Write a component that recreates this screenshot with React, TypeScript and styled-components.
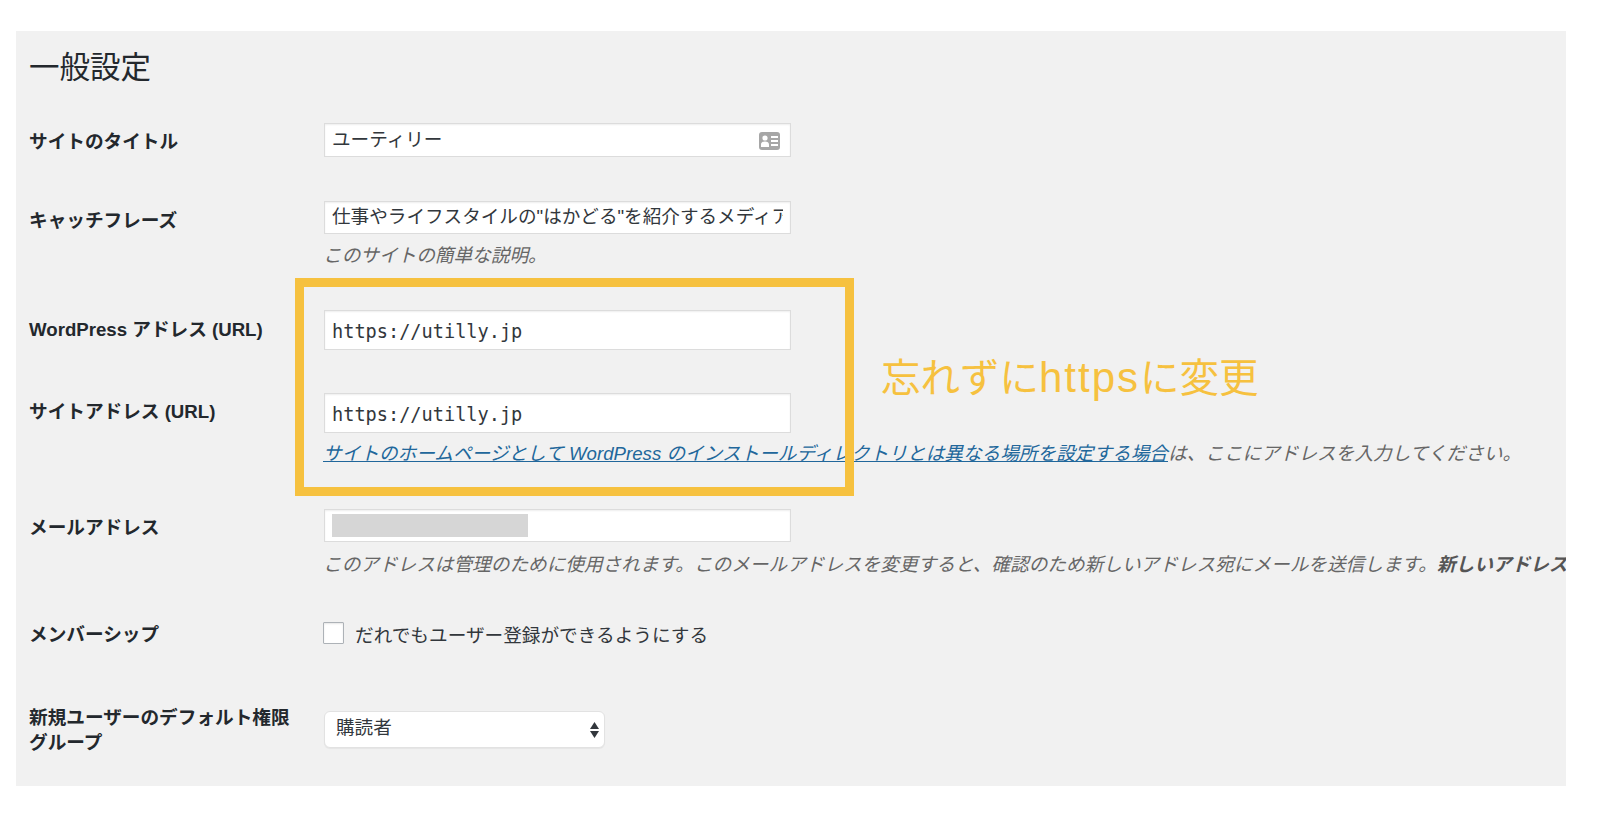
import React from 'react'
import styled, { createGlobalStyle } from 'styled-components'

const SANS = '"Liberation Sans", "Noto Sans CJK JP", sans-serif'
const ACCENT = '#f6c13f'

export default function App() {
  return (
    <>
      <GlobalStyle />
      <Panel>
        <Title>一般設定</Title>

        <Row $gap={36}>
          <Label $offset={7}>サイトのタイトル</Label>
          <Field>
            <TextInput $height={34} readOnly value="ユーティリー" />
            <ContactIcon viewBox="0 0 21 18">
              <rect width="21" height="18" rx="3" fill="#a6a6a6" />
              <circle cx="6" cy="6" r="2.6" fill="#fff" />
              <path d="M2 15v-2.5c0-1.8 1.6-3 4-3s4 1.2 4 3V15z" fill="#fff" />
              <path d="M12 4h7v2h-7zM12 8h7v2h-7zM12 12h7v2h-7z" fill="#fff" />
            </ContactIcon>
          </Field>
        </Row>

        <Row $gap={44}>
          <Label $offset={8}>キャッチフレーズ</Label>
          <Field>
            <TextInput $height={33} readOnly value={'仕事やライフスタイルの"はかどる"を紹介するメディア'} />
            <Hint $gap={10}>このサイトの簡単な説明。</Hint>
          </Field>
        </Row>

        <Row $gap={42}>
          <Label $offset={8}>WordPress アドレス (URL)</Label>
          <Field>
            <TextInput $height={40} $mono readOnly value="https://utilly.jp" />
          </Field>
        </Row>

        <Row $gap={43}>
          <Label $offset={7}>サイトアドレス (URL)</Label>
          <Field>
            <TextInput $height={40} $mono readOnly value="https://utilly.jp" />
            <Hint $gap={9}>
              <HintLink href="#">サイトのホームページとして WordPress のインストールディレクトリとは異なる場所を設定する場合</HintLink>
              は、ここにアドレスを入力してください。
            </Hint>
          </Field>
        </Row>

        <Row $gap={43}>
          <Label $offset={7}>メールアドレス</Label>
          <Field>
            <EmailBox>
              <Redaction />
            </EmailBox>
            <Hint $gap={11}>
              このアドレスは管理のために使用されます。このメールアドレスを変更すると、確認のため新しいアドレス宛にメールを送信します。
              <strong>新しいアドレスは確認が完了するまで有効になりません。</strong>
            </Hint>
          </Field>
        </Row>

        <Row $gap={45}>
          <Label $offset={1}>メンバーシップ</Label>
          <CheckRow>
            <CheckBox type="checkbox" />
            <span>だれでもユーザー登録ができるようにする</span>
          </CheckRow>
        </Row>

        <Row $gap={58}>
          <Label $wrapped>新規ユーザーのデフォルト権限グループ</Label>
          <SelectField>
            <RoleSelect defaultValue="subscriber">
              <option value="subscriber">購読者</option>
            </RoleSelect>
            <SelectArrows viewBox="0 0 9 16">
              <path d="M4.5 0 9 7H0z" fill="#32373c" />
              <path d="M0 9h9l-4.5 7z" fill="#32373c" />
            </SelectArrows>
          </SelectField>
        </Row>

        <Highlight />
        <Annotation>
          忘れずに<AnnotationLatin>https</AnnotationLatin>に変更
        </Annotation>
      </Panel>
    </>
  )
}

const GlobalStyle = createGlobalStyle`
  html, body {
    margin: 0;
    background: #fff;
  }
  body {
    font-family: ${SANS};
    color: #23282d;
  }
`

const Panel = styled.main`
  position: relative;
  box-sizing: border-box;
  width: 1550px;
  height: 755px;
  margin: 31px 0 40px 16px;
  padding: 16px 0 0 13px;
  background: #f1f1f1;
  overflow: hidden;
`

const Title = styled.h1`
  margin: 0;
  font-size: 30.5px;
  font-weight: 400;
  line-height: 40px;
  color: #23282d;
`

const Row = styled.div<{ $gap: number }>`
  display: flex;
  margin-top: ${({ $gap }) => $gap}px;
`

const Label = styled.div<{ $offset?: number; $wrapped?: boolean }>`
  flex: none;
  box-sizing: border-box;
  width: 271px;
  margin-right: 24px;
  padding-top: ${({ $offset }) => $offset ?? 0}px;
  font-size: 18.65px;
  font-weight: 700;
  line-height: ${({ $wrapped }) => ($wrapped ? 25 : 24)}px;
`

const Field = styled.div`
  position: relative;
  width: 467px;
`

const TextInput = styled.input<{ $height: number; $mono?: boolean }>`
  display: block;
  box-sizing: border-box;
  width: 100%;
  height: ${({ $height }) => $height}px;
  margin: 0;
  padding: ${({ $mono }) => ($mono ? '2px 7px 0' : '0 7px 6px')};
  background: #fff;
  border: 1.5px solid #dcdcdc;
  border-radius: 0;
  box-shadow: inset 0 1px 2px rgba(0, 0, 0, 0.07);
  outline: none;
  color: #32373c;
  font-family: ${({ $mono }) => ($mono ? '"DejaVu Sans Mono", "Noto Sans CJK JP", monospace' : SANS)};
  font-size: 18.6px;
`

const ContactIcon = styled.svg`
  position: absolute;
  top: 9px;
  right: 11px;
  width: 21px;
  height: 18px;
`

const Hint = styled.p<{ $gap: number }>`
  margin: ${({ $gap }) => $gap}px 0 0 -1px;
  font-size: 18.65px;
  font-style: italic;
  line-height: 24px;
  white-space: nowrap;
  color: #666;

  strong {
    font-weight: 700;
    color: #555;
  }
`

const HintLink = styled.a`
  color: #21679b;
  text-decoration: underline;
`

const EmailBox = styled.div`
  box-sizing: border-box;
  height: 33px;
  padding: 4px 7px;
  background: #fff;
  border: 1.5px solid #dcdcdc;
  box-shadow: inset 0 1px 2px rgba(0, 0, 0, 0.07);
`

const Redaction = styled.div`
  width: 196px;
  height: 23px;
  background: #d6d6d6;
`

const CheckRow = styled.label`
  display: flex;
  align-items: center;
  gap: 11px;
  height: 22px;
  margin-left: -1px;
  font-size: 18.65px;
  color: #32373c;
`

const CheckBox = styled.input`
  appearance: none;
  box-sizing: border-box;
  width: 21px;
  height: 22px;
  margin: 0;
  background: #fff;
  border: 1.5px solid #adb2b7;
  border-radius: 1px;
  box-shadow: inset 0 1px 2px rgba(0, 0, 0, 0.1);
`

const SelectField = styled.div`
  position: relative;
  width: 281px;
  height: 37px;
  margin-top: 6px;
`

const RoleSelect = styled.select`
  appearance: none;
  box-sizing: border-box;
  width: 100%;
  height: 100%;
  padding: 0 11px 4px;
  background: #fff;
  border: 1.5px solid #e2e2e2;
  border-radius: 6px;
  box-shadow: 0 1px 1px rgba(0, 0, 0, 0.05);
  outline: none;
  color: #32373c;
  font-family: ${SANS};
  font-size: 18.6px;
`

const SelectArrows = styled.svg`
  position: absolute;
  top: 11px;
  right: 6px;
  width: 9px;
  height: 16px;
`

const Highlight = styled.div`
  position: absolute;
  left: 279px;
  top: 247px;
  box-sizing: border-box;
  width: 559px;
  height: 218px;
  border: 9.5px solid ${ACCENT};
`

const Annotation = styled.div`
  position: absolute;
  left: 865px;
  top: 323px;
  font-size: 39.5px;
  line-height: 48px;
  white-space: nowrap;
  color: ${ACCENT};
`

const AnnotationLatin = styled.span`
  font-size: 42px;
  letter-spacing: 2px;
`
